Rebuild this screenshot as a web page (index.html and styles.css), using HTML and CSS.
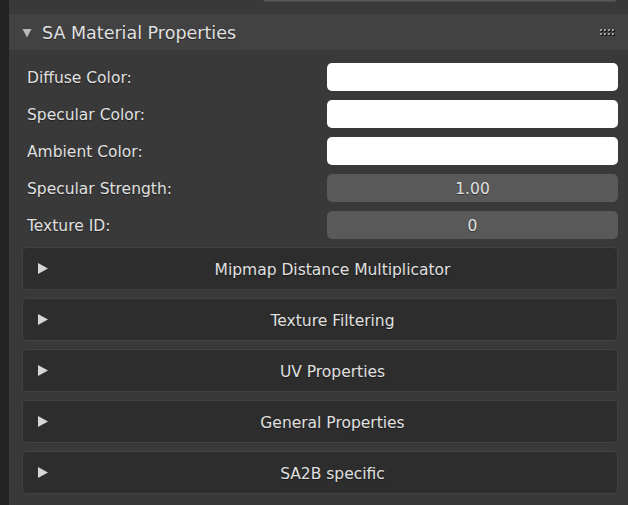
FILE: index.html
```html
<!DOCTYPE html>
<html>
<head>
<meta charset="utf-8">
<link rel="stylesheet" href="styles.css">
</head>
<body>
<div class="strip"></div>
<div class="area">
  <div class="topfield"></div>
  <div class="panel-header">
    <svg class="disclose" width="10" height="10" viewBox="0 0 10 10"><polygon points="0.5,1 9.5,1 5,9.5" fill="#b8b8b8"/></svg>
    <span class="title">SA Material Properties</span>
    <svg class="grip" width="16" height="8" viewBox="0 0 16 8">
      <g fill="#141414"><rect x="1" y="1" width="2" height="2"/><rect x="5" y="1" width="2" height="2"/><rect x="9" y="1" width="2" height="2"/><rect x="13" y="1" width="2" height="2"/><rect x="1" y="5" width="2" height="2"/><rect x="5" y="5" width="2" height="2"/><rect x="9" y="5" width="2" height="2"/><rect x="13" y="5" width="2" height="2"/></g>
      <g fill="#9a9a9a"><rect x="0" y="0" width="2" height="2"/><rect x="4" y="0" width="2" height="2"/><rect x="8" y="0" width="2" height="2"/><rect x="12" y="0" width="2" height="2"/><rect x="0" y="4" width="2" height="2"/><rect x="4" y="4" width="2" height="2"/><rect x="8" y="4" width="2" height="2"/><rect x="12" y="4" width="2" height="2"/></g>
    </svg>
  </div>
  <div class="panel-body">
    <div class="props">
      <span class="label">Diffuse Color:</span><div class="color"></div>
      <span class="label">Specular Color:</span><div class="color"></div>
      <span class="label">Ambient Color:</span><div class="color"></div>
      <span class="label">Specular Strength:</span><div class="num">1.00</div>
      <span class="label">Texture ID:</span><div class="num">0</div>
    </div>
    <div class="subpanels">
      <div class="sub"><svg class="arrow" width="10" height="11" viewBox="0 0 10 11"><polygon points="0,0 10,5.5 0,11" fill="#d6d6d6"/></svg><span class="sub-title">Mipmap Distance Multiplicator</span></div>
      <div class="sub"><svg class="arrow" width="10" height="11" viewBox="0 0 10 11"><polygon points="0,0 10,5.5 0,11" fill="#d6d6d6"/></svg><span class="sub-title">Texture Filtering</span></div>
      <div class="sub"><svg class="arrow" width="10" height="11" viewBox="0 0 10 11"><polygon points="0,0 10,5.5 0,11" fill="#d6d6d6"/></svg><span class="sub-title">UV Properties</span></div>
      <div class="sub"><svg class="arrow" width="10" height="11" viewBox="0 0 10 11"><polygon points="0,0 10,5.5 0,11" fill="#d6d6d6"/></svg><span class="sub-title">General Properties</span></div>
      <div class="sub"><svg class="arrow" width="10" height="11" viewBox="0 0 10 11"><polygon points="0,0 10,5.5 0,11" fill="#d6d6d6"/></svg><span class="sub-title">SA2B specific</span></div>
    </div>
  </div>
</div>
</body>
</html>
```

FILE: styles.css
```css
html, body {
  margin: 0;
  padding: 0;
  height: 100%;
  overflow: hidden;
}
body {
  display: flex;
  background: #232323;
  font-family: "DejaVu Sans", sans-serif;
  color: #e0e0e0;
}
.strip {
  width: 9px;
  flex: none;
}
.area {
  flex: 1;
  background: #393939;
  display: flex;
  flex-direction: column;
}
.topfield {
  margin-left: 254px;
  width: 351px;
  height: 1px;
  background: #575757;
  border: 1px solid #4a4a4a;
  border-top: none;
  border-radius: 0 0 4px 4px;
}
.panel-header {
  margin-top: 12px;
  height: 36px;
  background: #424242;
  display: flex;
  align-items: center;
  padding-left: 13px;
  padding-right: 12px;
}
.disclose {
  display: block;
  margin-top: 1px;
}
.title {
  margin-left: 10px;
  padding-top: 2px;
  font-size: 17.5px;
  text-shadow: 0 1px 1px rgba(0,0,0,0.45);
  flex: 1;
}
.grip {
  display: block;
  margin-top: 1px;
}
.panel-body {
  padding: 13px 10px 0 13px;
  display: flex;
  flex-direction: column;
  gap: 8px;
}
.props {
  display: grid;
  grid-template-columns: 1fr 291px;
  grid-auto-rows: 28px;
  row-gap: 9px;
  align-items: center;
}
.label {
  padding-left: 5px;
  padding-top: 2px;
  font-size: 15.5px;
  text-shadow: 0 1px 1px rgba(0,0,0,0.45);
}
.color {
  height: 28px;
  background: #ffffff;
  border-radius: 5px;
}
.num {
  height: 28px;
  background: #595959;
  border-radius: 5px;
  display: flex;
  align-items: center;
  justify-content: center;
  padding-top: 2px;
  box-sizing: border-box;
  font-size: 15.5px;
  text-shadow: 0 1px 1px rgba(0,0,0,0.45);
}
.subpanels {
  display: flex;
  flex-direction: column;
  gap: 8px;
}
.sub {
  height: 41px;
  background: #2d2d2d;
  border: 1px solid #424242;
  border-radius: 5px;
  display: flex;
  align-items: center;
  padding-left: 15px;
}
.arrow {
  display: block;
  flex: none;
}
.sub-title {
  flex: 1;
  text-align: center;
  padding-top: 2px;
  font-size: 15.5px;
  text-shadow: 0 1px 1px rgba(0,0,0,0.45);
}
```
